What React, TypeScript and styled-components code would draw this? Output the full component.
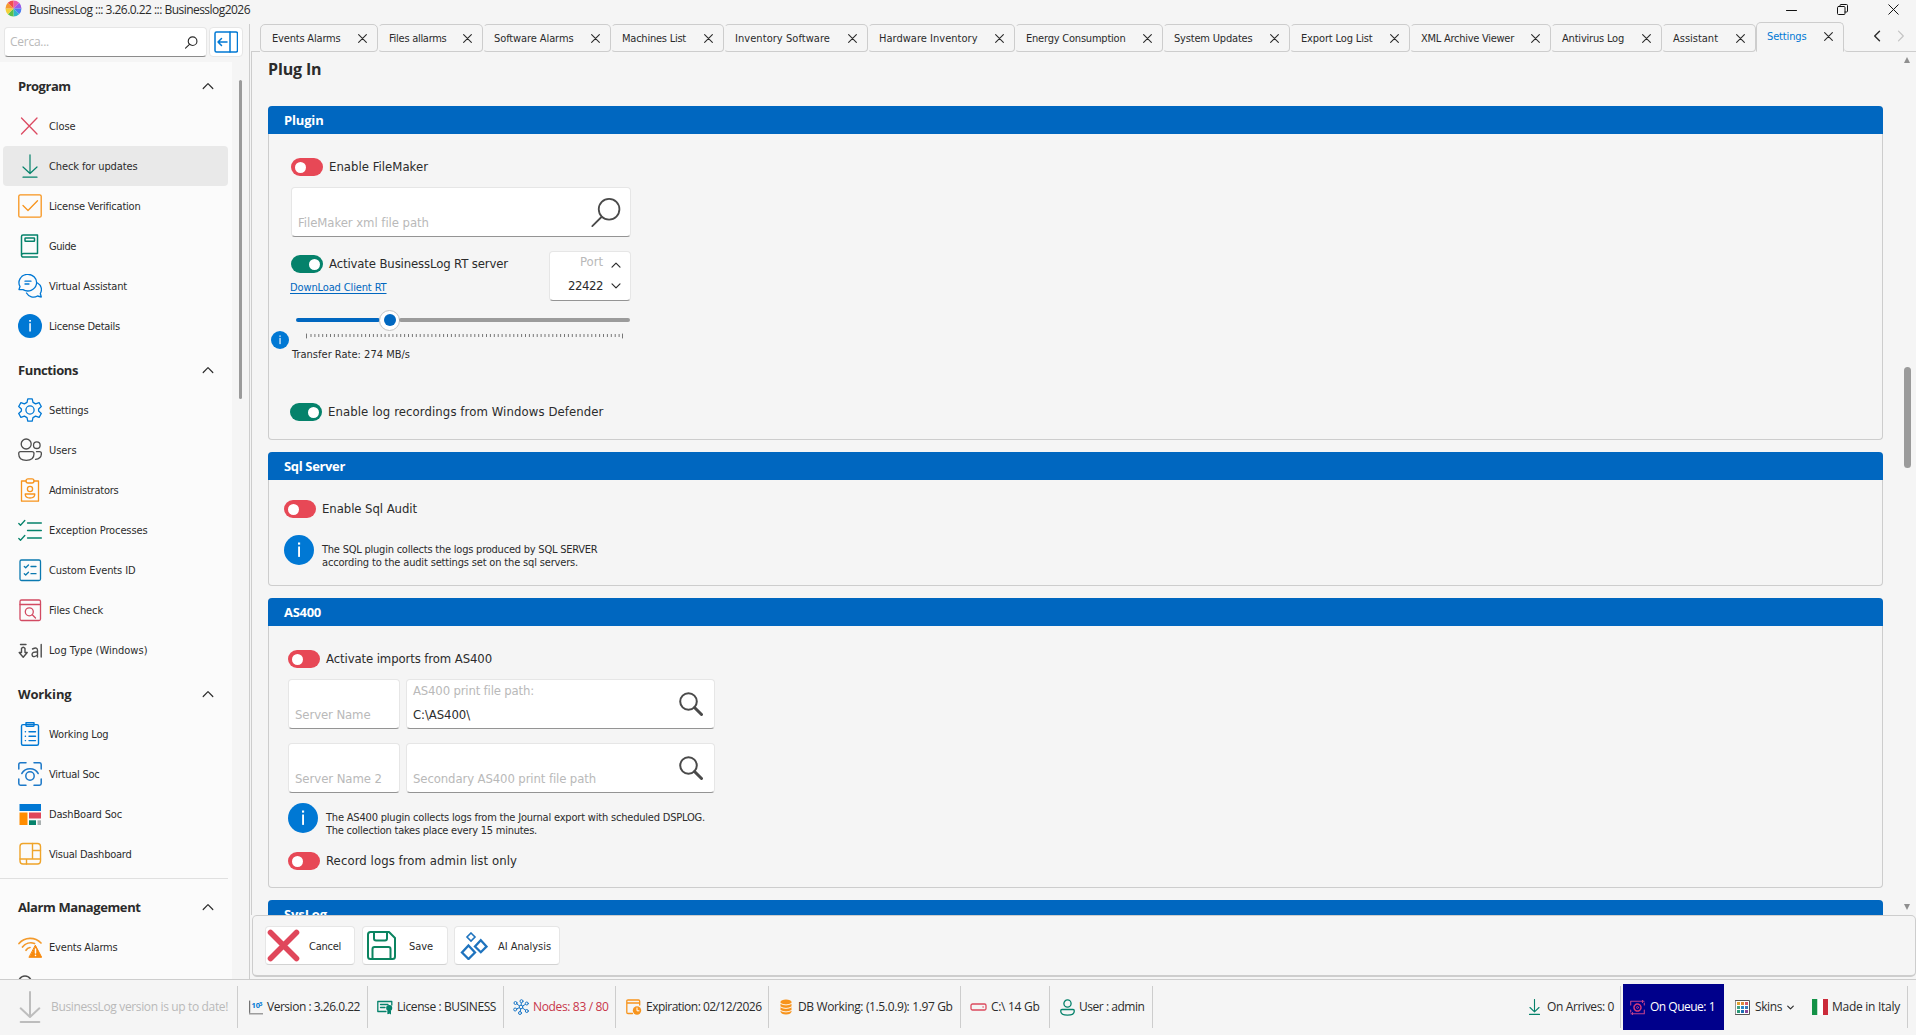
import React, { useMemo } from 'react';
import styled, { createGlobalStyle, css } from 'styled-components';

const TAHOMA = '"DejaVu Sans Condensed", "DejaVu Sans", sans-serif';
const SEGOE = '"Open Sans", "Noto Sans", sans-serif';
const C = {
  bg: '#f5f5f5', side: '#fbfbfb', line: '#cdcdcd', text: '#2b2b2b', faint: '#b9b9b9',
  blue: '#0078d4', head: '#0067c0', red: '#e74856', green: '#05826b', orange: '#f7941d', gray: '#4d4d4d',
};

const Global = createGlobalStyle`
  * { box-sizing: border-box; }
  body { margin: 0; background: ${C.bg}; color: ${C.text}; overflow: hidden; }
  svg { display: block; flex: none; fill: none; stroke-linecap: round; stroke-linejoin: round; }
`;

/* ---------- text ---------- */
type Face = 'small' | 'label' | 'status' | 'heading' | 'title';
const FACES: Record<Face, { size: number; family: string; bold?: boolean }> = {
  small: { size: 11, family: TAHOMA },
  label: { size: 13, family: TAHOMA },
  status: { size: 12, family: SEGOE },
  heading: { size: 13, family: SEGOE, bold: true },
  title: { size: 16, family: SEGOE, bold: true },
};
const TextSpan = styled.span<{ $face: Face; $color?: string; $underline?: boolean }>`
  display: block;
  white-space: pre;
  font-family: ${p => FACES[p.$face].family};
  font-size: ${p => FACES[p.$face].size}px;
  font-weight: ${p => (FACES[p.$face].bold ? 700 : 400)};
  line-height: ${p => FACES[p.$face].size + 4}px;
  color: ${p => p.$color ?? C.text};
  ${p => p.$underline && css`text-decoration: underline; text-underline-offset: 2px;`}
`;
const ruler = document.createElement('canvas').getContext('2d')!;

/** A caption whose tracking is computed so that it runs exactly `w` pixels wide. */
function Txt({ w, face = 'small', color, underline, children }: {
  w: number; face?: Face; color?: string; underline?: boolean; children: string;
}) {
  const tracking = useMemo(() => {
    const f = FACES[face];
    ruler.font = `${f.bold ? 'bold ' : ''}${f.size}px ${f.family}`;
    return (w - ruler.measureText(children).width) / children.length;
  }, [w, face, children]);
  return (
    <TextSpan $face={face} $color={color} $underline={underline} style={{ letterSpacing: `${tracking.toFixed(3)}px` }}>
      {children}
    </TextSpan>
  );
}

/* ---------- icons ---------- */
const Svg = ({ s = 24, w, h, vb = '0 0 24 24', c = C.text, sw = 1.3, children }: any) => (
  <svg width={w ?? s} height={h ?? s} viewBox={vb} stroke={c} strokeWidth={sw}>{children}</svg>
);
const Logo = () => (
  <svg width="17" height="17" viewBox="0 0 17 17">
    {['#e85bb0', '#9a5be8', '#4b7df0', '#2fb6c8', '#5cc04a', '#f2d136', '#f59a2f', '#f04e4e'].map((c, i) => (
      <path key={c} d="M8.500 8.500L8.500 .5A8 8 0 0 1 14.157 2.843Z" fill={c} transform={`rotate(${i * 45} 8.5 8.5)`} />
    ))}
  </svg>
);
const Search = ({ s = 24, c = C.text, sw = 1.3 }: any) => (
  <Svg s={s} c={c} sw={sw}><circle cx="14" cy="9.500" r="8" /><path d="M8.300 15.300L1 22.500" /></Svg>
);
const SearchBold = () => (
  <Svg s={24} c="#4a4a4a"><circle cx="9.500" cy="9.500" r="8.300" strokeWidth="2" /><path d="M15.500 15.500L22.500 22.500" strokeWidth="3" /></Svg>
);
const PaneIcon = () => (
  <Svg c={C.blue} sw={1.5}><rect x="1" y="2" width="22.500" height="20" rx="1.500" /><path d="M16 2V22M13 12H4M7.500 8.500L4 12L7.500 15.500" /></Svg>
);
const Chevron = ({ d = 'up', s = 12, c = C.text, sw = 1.2 }: any) => {
  const deg = ({ up: 0, right: 90, down: 180, left: 270 } as any)[d];
  return <Svg s={s} vb="0 0 12 12" c={c} sw={sw}><path d="M1.200 8.500L6 3.700L10.800 8.500" transform={`rotate(${deg} 6 6)`} /></Svg>;
};
const XIcon = ({ s = 9, c = C.text, sw = 1.2 }: any) => (
  <Svg s={s} vb="0 0 10 10" c={c} sw={sw}><path d="M.7.7L9.300 9.300M9.300.7L.7 9.300" /></Svg>
);
const Down = ({ s = 24, c = C.green, sw = 1.2 }: any) => (
  <Svg s={s} c={c} sw={sw}><path d="M12 .8V19M5 13L12 19.500L19 13M5 23.200H19" /></Svg>
);
const Info = ({ s = 24 }: any) => (
  <Svg s={s} c="none"><circle cx="12" cy="12" r="12" fill={C.blue} /><rect x="11.300" y="9.200" width="1.500" height="8.300" fill="#fff" /><rect x="11.200" y="6" width="1.700" height="1.700" fill="#fff" /></Svg>
);

const icons: Record<string, React.ReactNode> = {
  close: <Svg c="#dc4a62"><path d="M3.500 4L19 20M19 4L3.500 20" /></Svg>,
  download: <Down />,
  verify: <Svg c={C.orange}><rect x=".8" y=".8" width="22.400" height="22.400" rx="1.500" /><path d="M5 11.500L10 16.500L19.500 6.800" /></Svg>,
  guide: <Svg c={C.green} sw={1.5}><path d="M3.500 21.300V2.500Q3.500 1 5 1H19.500V19.500H5.500Q3.500 19.500 3.500 21.300T5.500 23H19.500" /><rect x="7" y="4" width="9.500" height="3.200" rx=".5" /></Svg>,
  chat: <Svg c={C.blue} sw={1.3}><path d="M1 15.500L2 12.500A8.800 8.300 0 1 1 5 15.600Z" /><path d="M7 7.200H13M7 10H11M19.500 9A7.500 7.500 0 0 1 22.300 19.500L23.300 23L19.500 22A8 8 0 0 1 8.500 19" /></Svg>,
  info: <Info />,
  gear: <Svg c={C.blue} sw={1.3}><path d="M9.800 .8H14.200L15 4.400L17.600 5.900L21.100 4.700L23.300 8.500L20.600 11V13L23.300 15.500L21.100 19.300L17.600 18.100L15 19.600L14.200 23.200H9.800L9 19.600L6.400 18.100L2.900 19.300L.7 15.500L3.400 13V11L.7 8.500L2.900 4.700L6.400 5.900L9 4.400Z" /><circle cx="12" cy="12" r="4.100" /></Svg>,
  users: <Svg c={C.gray} sw={1.3}><circle cx="8.200" cy="6" r="5" /><circle cx="18.800" cy="7.200" r="3.300" /><path d="M2.500 13.700H14Q16 13.700 16 15.700Q16 22.300 8.300 22.300T.7 15.700Q.7 13.700 2.500 13.700ZM18.500 13.700H21.500Q23.400 13.700 23.400 15.500Q23.400 20.700 17.500 21.300" /></Svg>,
  badge: <Svg c={C.orange}><path d="M8 3H3.500V23.200H20.500V3H16" /><rect x="8" y=".8" width="8" height="4.200" rx="2" /><circle cx="12" cy="11" r="2.600" /><path d="M7.200 16H16.800Q16.800 20 12 20T7.200 16Z" /></Svg>,
  checks: <Svg c={C.green}><path d="M.8 5.500L2.500 7.300L6.800 2.500M.8 20.500L2.500 22.300L6.800 17.500M9.500 5H23.400M9.500 12.500H23.400M9.500 20H23.400" /></Svg>,
  events: <Svg c="#0b79b0"><rect x="2" y="2" width="20.500" height="20.500" rx="1.500" /><path d="M6.300 8.500L7.700 9.800L10.500 7M6.300 15.700L7.700 17L10.500 14.200M13 8.500H18M13 15.700H18" /></Svg>,
  files: <Svg c="#d24a62"><rect x="2" y="2" width="20.500" height="20.500" rx="1.500" /><path d="M2 6.500H22.500M14.300 16.800L17.500 20" /><circle cx="11.300" cy="13.800" r="4" /></Svg>,
  logtype: <Svg c={C.gray} sw={1.4}><path d="M2.500 6.500H8M3.500 10.500Q5.200 8 7 10.500V14.500H9.200L5.200 19.200L1.200 14.500H3.500ZM14.500 11Q19.500 8.500 19.500 12.500V19M19.500 14Q14 13.500 14 16.700Q14.500 20.500 19.500 17M23.200 6.500V19" /></Svg>,
  clipboard: <Svg c={C.blue} sw={1.4}><rect x="3.500" y="2.600" width="17" height="20.700" rx="1.500" /><path d="M8 .8H16V3.500Q16 4.300 15 4.300H9Q8 4.300 8 3.500ZM7.300 9.800H7.500M7.300 14.200H7.500M7.300 18.600H7.500M11 9.800H17.500M11 14.200H17.500M11 18.600H17.500" /></Svg>,
  vsoc: <Svg c="#1c78c8" sw={1.5}><path d="M.8 7V2.500Q.8.8 2.500.8H8M16 .8H21.500Q23.200.8 23.200 2.500V7M.8 17V21.500Q.8 23.200 2.500 23.200H8M16 23.200H21.500Q23.200 23.200 23.200 21.500V17M3.800 11.500A9.500 9.500 0 0 1 20.200 11.500" /><circle cx="12" cy="14" r="4.200" /></Svg>,
  dash: <svg width="24" height="24" viewBox="0 0 24 24"><path d="M1.500 2H23V9H1.500Z" fill={C.blue} /><path d="M1.500 10.500H9.500V23H1.500Z" fill="#ff8c00" /><path d="M11 10.500H23V16.500H11Z" fill="#e0475b" /><path d="M11 18.300H18V23H11Z" fill={C.green} /><path d="M19.500 18.300H23V23H19.500Z" fill="#a9b0b0" /></svg>,
  visual: <Svg c="#efa42a" sw={1.4}><rect x="2" y="1.500" width="20.500" height="20.500" rx="3" /><path d="M14.500 1.500V17M2 17H22.500M14.500 8.500H22.500M8.500 17V22" /></Svg>,
  alarm: <Svg c="#f39a2b" sw={1.7}><path d="M1 8.500A15 15 0 0 1 23 8M4.500 12A10.500 10.500 0 0 1 16.500 8.500M8 15.300A6 6 0 0 1 12 12.500" /><path d="M17.500 10.500L23.700 22.300H11.300Z" fill="#f7890c" stroke="#f7890c" strokeWidth="1" /><path d="M17.500 14V18M17.500 20.200V20.400" stroke="#fff" strokeWidth="1.500" /></Svg>,
  stub: <Svg c={C.gray} sw={1.5}><path d="M1 9V5Q3 1 7 1T13 5V9" /></Svg>,
};

/* ---------- frame ---------- */
const Window = styled.div`width: 1916px; height: 1035px; display: flex; flex-direction: column; background: ${C.bg}; overflow: hidden;`;
const TitleBar = styled.header`height: 24px; flex: none; display: flex; align-items: flex-start; padding-left: 5px; gap: 7px;`;
const TitleText = styled.div`flex: 1; padding-top: 2px;`;
const WinButtons = styled.div`display: flex; align-items: center; gap: 40px; height: 18px; padding: 1px 17px 0 0;`;
const Body = styled.div`height: 955px; flex: none; display: flex;`;

const Sidebar = styled.aside`width: 250px; flex: none; display: flex; flex-direction: column; border-right: 1px solid ${C.line};`;
const SearchRow = styled.div`display: flex; gap: 2px; padding: 3px 0 0 4px; height: 38px; flex: none;`;
const raised = css`background: #fff; border: 1px solid #e6e6e6; border-radius: 4px;`;
const SearchBox = styled.div`${raised} width: 203px; height: 30px; display: flex; align-items: center; justify-content: space-between; padding: 0 8px 0 5px; border-bottom-color: #8c8c8c;`;
const PaneButton = styled.div`${raised} width: 34px; height: 30px; display: flex; align-items: center; justify-content: center;`;
const NavArea = styled.div`flex: 1; min-height: 0; display: flex; gap: 7px; overflow: hidden;`;
const Nav = styled.nav`width: 232px; background: ${C.side}; padding-top: 4px; overflow: hidden;`;
const NavThumb = styled.div`width: 3px; height: 319px; margin-top: 18px; border-radius: 2px; background: #9b9b9b;`;
const NavGroup = styled.section<{ $ruled?: boolean }>`
  margin-bottom: 4px;
  ${p => p.$ruled && css`border-top: 1px solid #e0e0e0; padding-top: 8px; margin-right: 4px;`}
`;
const NavHead = styled.div`height: 40px; width: 214px; padding-left: 18px; display: flex; align-items: center; justify-content: space-between;`;
const NavItem = styled.div<{ $active?: boolean }>`
  height: 40px; width: 225px; margin-left: 3px; padding-left: 15px; display: flex; align-items: center; gap: 7px; border-radius: 4px;
  background: ${p => (p.$active ? '#e9e9e9' : 'transparent')};
`;

const Main = styled.main`width: 1666px; flex: none; display: flex; flex-direction: column;`;
const TabStrip = styled.div`height: 28px; flex: none; display: flex; align-items: flex-end;`;
const TabLead = styled.div`width: 9px; height: 1px; margin-left: 1px; background: ${C.line};`;
const Tab = styled.div<{ $w: number; $on?: boolean }>`
  width: ${p => p.$w}px; height: ${p => (p.$on ? 30 : 28)}px; flex: none;
  display: flex; align-items: center; justify-content: space-between; padding: ${p => (p.$on ? '0 10.5px 1px 10px' : '1px 10.5px 0 10px')};
  border: 1px solid ${C.line}; border-radius: 5px 5px ${p => (p.$on ? '0 0' : '4px 4px')};
  border-left-color: ${p => (p.$on ? C.line : 'transparent')};
  border-bottom-color: ${p => (p.$on ? 'transparent' : C.line)};
  &:nth-child(2) { border-left-color: ${C.line}; padding-left: 11px; }
`;
const TabTail = styled.div`flex: 1; height: 28px; display: flex; align-items: center; justify-content: flex-end; gap: 12px; padding: 0 9px 3px 0; border-bottom: 1px solid ${C.line}; border-bottom-left-radius: 4px;`;
const Page = styled.div`height: 863px; flex: none; margin-left: 1px; border-left: 1px solid ${C.line}; display: flex; overflow: hidden; padding-left: 16px;`;
const Column = styled.div`width: 1615px; flex: none;`;
const PageTitle = styled.div`height: 54px; padding-top: 7px;`;
const Group = styled.section<{ $h: number }>`height: ${p => p.$h}px; margin-bottom: 12px; border: 1px solid ${C.line}; border-top: 0; border-radius: 4px;`;
const GroupHead = styled.div`height: 28px; margin: 0 -1px; padding: 0 16px; display: flex; align-items: center; background: ${C.head}; border-radius: 4px 4px 0 0;`;
const ScrollColumn = styled.div`flex: 1; display: flex; flex-direction: column; align-items: center; padding: 5px 0 5px 15px;`;
const Arrow = styled.i<{ $down?: boolean }>`width: 0; height: 0; border: 3.500px solid transparent; ${p => (p.$down ? 'border-top: 6px solid #8f8f8f; border-bottom: 0;' : 'border-bottom: 6px solid #8f8f8f; border-top: 0;')}`;
const Thumb = styled.div`width: 7px; height: 101px; margin-top: 304px; margin-bottom: auto; border-radius: 4px; background: #9b9b9b;`;

const Stack = styled.div<{ $l: number; $t: number }>`display: flex; flex-direction: column; padding: ${p => p.$t}px 0 0 ${p => p.$l}px;`;
const Row = styled.div<{ $gap?: number; $top?: number; $left?: number; $align?: string }>`
  display: flex; align-items: ${p => p.$align ?? 'center'}; gap: ${p => p.$gap ?? 0}px; margin: ${p => p.$top ?? 0}px 0 0 ${p => p.$left ?? 0}px;
`;
const Switch = styled.div<{ $on?: boolean }>`
  width: 32px; height: 18px; flex: none; border-radius: 9px; display: flex; align-items: center; padding: 0 3.500px;
  background: ${p => (p.$on ? C.green : C.red)}; justify-content: ${p => (p.$on ? 'flex-end' : 'flex-start')};
  &::after { content: ''; width: 11px; height: 11px; border-radius: 50%; background: #fff; }
`;
const SwitchLabel = styled.div`height: 18px;`;
const Field = styled.div<{ $w: number; $pr?: number }>`
  ${raised} width: ${p => p.$w}px; height: 50px; flex: none; border-bottom-color: #949494;
  display: flex; align-items: center; justify-content: space-between; padding: 0 ${p => p.$pr ?? 11}px 0 6px;
`;
const FieldText = styled.div`height: 100%; display: flex; flex-direction: column; justify-content: space-between; padding: 2px 0 5px;`;
const Spinner = styled.div`${raised} width: 82px; height: 50px; border-bottom-color: #949494; display: flex; justify-content: flex-end; gap: 8px; padding-right: 9px;`;
const SpinText = styled.div`display: flex; flex-direction: column; align-items: flex-end; gap: 7px; padding-top: 1px;`;
const SpinArrows = styled.div`display: flex; flex-direction: column; gap: 11px; padding-top: 8px;`;
const Slider = styled.div`width: 334px; height: 22px; display: flex; align-items: center; margin: 8px 0 0 5px;`;
const Track = styled.div<{ $w: number; $c: string }>`width: ${p => p.$w}px; height: 4px; border-radius: 2px; background: ${p => p.$c};`;
const Knob = styled.div`width: 21px; height: 21px; margin: 0 -1px; border: 1px solid #c4c4c4; border-radius: 50%; background: #fff; display: flex; align-items: center; justify-content: center; &::after { content: ''; width: 12px; height: 12px; border-radius: 50%; background: ${C.head}; }`;
const TickRow = styled.div`height: 16px; display: flex; align-items: flex-start; gap: 17px; margin-left: -20px; & > :last-child { margin-top: 2px; }`;
const Note = styled.div`display: flex; flex-direction: column; margin-bottom: -4px; & > * { line-height: 13px; }`;

const Footer = styled.div`height: 62px; flex: none; margin-left: 2px; border: 1px solid ${C.line}; border-bottom: 2px solid ${C.line}; border-radius: 5px; display: flex; align-items: flex-start; padding: 10px 0 0 12px;`;
const Button = styled.div<{ $w: number; $gap: number; $ml: number; $pl: number }>`
  ${raised} width: ${p => p.$w}px; height: 39px; margin-left: ${p => p.$ml}px; padding-left: ${p => p.$pl}px; gap: ${p => p.$gap}px;
  display: flex; align-items: center; border-bottom-color: #d2d2d2;
  & > span { padding-top: 2px; }
`;

const StatusBar = styled.footer`height: 56px; flex: none; border-top: 1px solid ${C.line}; display: flex; align-items: flex-start; padding-top: 4px;`;
const Cell = styled.div<{ $w: number; $pl: number; $gap: number; $sep?: boolean; $navy?: boolean }>`
  width: ${p => p.$w}px; height: ${p => (p.$navy ? 46 : 42)}px; margin-top: ${p => (p.$navy ? 0 : 2)}px; flex: none;
  display: flex; align-items: center; padding-left: ${p => p.$pl}px; gap: ${p => p.$gap}px;
  border-right: 1px solid ${p => (p.$sep ? C.line : 'transparent')};
  background: ${p => (p.$navy ? '#00008b' : 'transparent')};
`;
const Spacer = styled.div`flex: 1;`;

/* ---------- data ---------- */
type Item = [string, string, number];
const groups: { title: string; w: number; ruled?: boolean; items: Item[] }[] = [
  { title: 'Program', w: 52.5, items: [['close', 'Close', 26.5], ['download', 'Check for updates', 88.5], ['verify', 'License Verification', 91.5], ['guide', 'Guide', 27], ['chat', 'Virtual Assistant', 78], ['info', 'License Details', 71]] },
  { title: 'Functions', w: 60, items: [['gear', 'Settings', 39.5], ['users', 'Users', 27.5], ['badge', 'Administrators', 69.5], ['checks', 'Exception Processes', 98.5], ['events', 'Custom Events ID', 86.5], ['files', 'Files Check', 54], ['logtype', 'Log Type (Windows)', 98.5]] },
  { title: 'Working', w: 53.5, items: [['clipboard', 'Working Log', 59.5], ['vsoc', 'Virtual Soc', 50.5], ['dash', 'DashBoard Soc', 73], ['visual', 'Visual Dashboard', 82.5]] },
  { title: 'Alarm Management', w: 122.5, ruled: true, items: [['alarm', 'Events Alarms', 68.5], ['stub', ' ', 3]] },
];
const tabs: [string, number, number][] = [
  ['Events Alarms', 68.5, 118], ['Files allarms', 57.5, 105], ['Software Alarms', 79.5, 128], ['Machines List', 64, 113],
  ['Inventory Software', 95, 144], ['Hardware Inventory', 98.5, 147], ['Energy Consumption', 99.500, 148], ['System Updates', 78.5, 127],
  ['Export Log List', 71.5, 120], ['XML Archive Viewer', 93, 141], ['Antivirus Log', 62, 111], ['Assistant', 45, 94], ['Settings', 39.5, 88],
];

const NumberIcon = () => (
  <svg width="14" height="15" viewBox="0 0 14 15">
    <path d="M.7 1V12.500" stroke="#555" /><path d="M.5 13.800H13.500" stroke="#444" strokeDasharray="1 1" strokeWidth="1.500" strokeLinecap="butt" />
    <text x="2.500" y="8" fontSize="7.500" fontWeight="700" fontFamily={SEGOE} fill={C.blue}>10</text>
    <text x="10" y="6" fontSize="6" fontWeight="700" fontFamily={SEGOE} fill={C.blue}>3</text>
  </svg>
);
const NODES = [[8.500, 2.200], [2.500, 4], [2.200, 10.500], [7, 14], [13.800, 12], [13.8, 4.500]];

const Toggle = ({ on, w, children }: { on?: boolean; w: number; children: string }) => (
  <><Switch $on={on} /><SwitchLabel><Txt face="label" w={w}>{children}</Txt></SwitchLabel></>
);

export default function App() {
  return (
    <Window>
      <Global />
      <TitleBar>
        <Logo />
        <TitleText><Txt face="status" w={221}>BusinessLog ::: 3.26.0.22 ::: Businesslog2026</Txt></TitleText>
        <WinButtons>
          <Svg s={11} vb="0 0 11 11" c="#111" sw={1}><path d="M.5 6.500H10.500" /></Svg>
          <Svg s={11} vb="0 0 11 11" c="#111" sw={1}><rect x=".5" y="2.500" width="7.500" height="8" rx="1" /><path d="M3 2.500V1.500Q3 .5 4 .5H9.500Q10.500.5 10.500 1.500V7Q10.500 8 9.500 8H8" /></Svg>
          <XIcon s={11} c="#111" sw={0.9} />
        </WinButtons>
      </TitleBar>

      <Body>
        <Sidebar>
          <SearchRow>
            <SearchBox><Txt face="status" color={C.faint} w={39}>Cerca...</Txt><Search s={13} sw={2.100} /></SearchBox>
            <PaneButton><PaneIcon /></PaneButton>
          </SearchRow>
          <NavArea>
            <Nav>
              {groups.map(g => (
                <NavGroup key={g.title} $ruled={g.ruled}>
                  <NavHead><Txt face="heading" w={g.w}>{g.title}</Txt><Chevron /></NavHead>
                  {g.items.map(([icon, label, w]) => (
                    <NavItem key={icon} $active={icon === 'download'}>{icons[icon]}<Txt w={w}>{label}</Txt></NavItem>
                  ))}
                </NavGroup>
              ))}
            </Nav>
            <NavThumb />
          </NavArea>
        </Sidebar>

        <Main>
          <TabStrip>
            <TabLead />
            {tabs.map(([label, w, tw]) => {
              const on = label === 'Settings';
              return <Tab key={label} $w={tw} $on={on}><Txt w={w} color={on ? C.blue : undefined}>{label}</Txt><XIcon /></Tab>;
            })}
            <TabTail><Chevron d="left" sw={1.4} /><Chevron d="right" c="#c4c4c4" /></TabTail>
          </TabStrip>

          <Page>
            <Column>
              <PageTitle><Txt face="title" w={53.5}>Plug In</Txt></PageTitle>

              <Group $h={334}>
                <GroupHead><Txt face="heading" color="#fff" w={39.5}>Plugin</Txt></GroupHead>
                <Stack $l={22} $t={24}>
                  <Row $gap={6}><Toggle w={99}>Enable FileMaker</Toggle></Row>
                  <Row $top={11}>
                    <Field $w={340} $pr={8}>
                      <FieldText><span /><Txt face="label" color={C.faint} w={131}>FileMaker xml file path</Txt></FieldText>
                      <Search s={31} c="#4a4a4a" sw={1.4} />
                    </Field>
                  </Row>
                  <Row $top={14} $align="flex-start">
                    <Stack $l={0} $t={4}>
                      <Row $gap={6}><Toggle on w={179}>Activate BusinessLog RT server</Toggle></Row>
                      <Row $top={7} $left={-1}><Txt color={C.head} underline w={96.5}>DownLoad Client RT</Txt></Row>
                    </Stack>
                    <Row $left={41}>
                      <Spinner>
                        <SpinText><Txt face="label" color={C.faint} w={23}>Port</Txt><Txt face="label" w={35}>22422</Txt></SpinText>
                        <SpinArrows><Chevron s={10} sw={1.400} /><Chevron s={10} sw={1.400} d="down" /></SpinArrows>
                      </Spinner>
                    </Row>
                  </Row>
                  <Slider>
                    <Track $w={84} $c={C.head} /><Knob /><Track $w={231} $c="#9b9b9b" />
                  </Slider>
                  <TickRow>
                    <Info s={18} />
                    <Svg w={317} h={6} vb="0 0 317 6" c="#777" sw={1}>
                      <path d="M.5 1V5M316.500 1V5" /><path d="M4.500 2.500H315" strokeWidth="3" strokeDasharray="1 2.900" strokeLinecap="butt" />
                    </Svg>
                  </TickRow>
                  <Row $left={1}><Txt w={118}>Transfer Rate: 274 MB/s</Txt></Row>
                  <Row $gap={6} $top={41} $left={-1}><Toggle on w={275.5}>Enable log recordings from Windows Defender</Toggle></Row>
                </Stack>
              </Group>

              <Group $h={134}>
                <GroupHead><Txt face="heading" color="#fff" w={61}>Sql Server</Txt></GroupHead>
                <Stack $l={15} $t={20}>
                  <Row $gap={6}><Toggle w={95}>Enable Sql Audit</Toggle></Row>
                  <Row $gap={8} $top={17} $align="flex-end">
                    <Info s={30} />
                    <Note><Txt w={275.5}>The SQL plugin collects the logs produced by SQL SERVER</Txt><Txt w={256}>according to the audit settings set on the sql servers.</Txt></Note>
                  </Row>
                </Stack>
              </Group>

              <Group $h={290}>
                <GroupHead><Txt face="heading" color="#fff" w={37}>AS400</Txt></GroupHead>
                <Stack $l={19} $t={24}>
                  <Row $gap={6}><Toggle w={166}>Activate imports from AS400</Toggle></Row>
                  <Row $gap={6} $top={11}>
                    <Field $w={112}><FieldText><span /><Txt face="label" color={C.faint} w={75.5}>Server Name</Txt></FieldText></Field>
                    <Field $w={309}>
                      <FieldText><Txt face="label" color={C.faint} w={121}>AS400 print file path:</Txt><Txt face="label" w={57}>{'C:\\AS400\\'}</Txt></FieldText>
                      <SearchBold />
                    </Field>
                  </Row>
                  <Row $gap={6} $top={14}>
                    <Field $w={112}><FieldText><span /><Txt face="label" color={C.faint} w={87}>Server Name 2</Txt></FieldText></Field>
                    <Field $w={309}>
                      <FieldText><span /><Txt face="label" color={C.faint} w={183}>Secondary AS400 print file path</Txt></FieldText>
                      <SearchBold />
                    </Field>
                  </Row>
                  <Row $gap={8} $top={10} $align="flex-end">
                    <Info s={30} />
                    <Note><Txt w={379}>The AS400 plugin collects logs from the Journal export with scheduled DSPLOG.</Txt><Txt w={211}>The collection takes place every 15 minutes.</Txt></Note>
                  </Row>
                  <Row $gap={6} $top={19}><Toggle w={191}>Record logs from admin list only</Toggle></Row>
                </Stack>
              </Group>

              <Group $h={60}>
                <GroupHead><Txt face="heading" color="#fff" w={43}>SysLog</Txt></GroupHead>
              </Group>
            </Column>
            <ScrollColumn><Arrow /><Thumb /><Arrow $down /></ScrollColumn>
          </Page>

          <Footer>
            <Button $w={90} $gap={9} $ml={0} $pl={1}>
              <Svg s={33} vb="0 0 33 33" c="#e0475b" sw={5.6}><path d="M3.500 3.500L29.500 29.500M29.500 3.500L3.500 29.500" /></Svg><Txt w={32}>Cancel</Txt>
            </Button>
            <Button $w={86} $gap={13} $ml={7} $pl={4}>
              <Svg s={29} vb="0 0 29 29" c="#0b8460" sw={2}><path d="M3.500 1H22L28 7V25.500Q28 28 25.500 28H3.500Q1 28 1 25.500V3.500Q1 1 3.500 1ZM7 1V7.500Q7 9.500 9 9.500H18Q20 9.500 20 7.500V1M5.500 28V18Q5.500 16 7.500 16H21.500Q23.500 16 23.500 18V28" /></Svg><Txt w={24}>Save</Txt>
            </Button>
            <Button $w={106} $gap={10} $ml={6} $pl={5}>
              <Svg s={28} vb="0 0 28 28" c="#1e73be" sw={2.3}><g strokeLinejoin="miter"><path d="M8.500 13.500L15 20.500L8.500 27L2 20.500Z" /><path d="M20.800 8.300L26.500 14.500L20.800 20.200L15 14.500Z" /><path d="M11 1L15 5L11 9L7 5Z" strokeWidth="1.600" /></g></Svg><Txt w={53}>AI Analysis</Txt>
            </Button>
          </Footer>
        </Main>
      </Body>

      <StatusBar>
        <Cell $w={238} $pl={14} $gap={5} $sep><Down s={32} c="#bdbdbd" sw={1.500} /><Txt face="status" color="#b9b9b9" w={177}>BusinessLog version is up to date!</Txt></Cell>
        <Cell $w={130} $pl={11} $gap={4} $sep><NumberIcon /><Txt face="status" w={93}>Version : 3.26.0.22</Txt></Cell>
        <Cell $w={136} $pl={9} $gap={4} $sep>
          <Svg s={16} vb="0 0 16 16" c={C.green}><path d="M9 12.500H.8V2.500H14.800V6M3.500 5.500H11M3.500 8.500H8" /><circle cx="12.200" cy="9" r="2.400" fill={C.green} /><path d="M10.900 12V15L12.200 14L13.500 15V12Z" fill={C.green} strokeWidth="1" /></Svg>
          <Txt face="status" w={99}>License : BUSINESS</Txt>
        </Cell>
        <Cell $w={112} $pl={9} $gap={4} $sep>
          <Svg s={16} vb="0 0 16 16" c="#1c78c8" sw={1}>{NODES.map(([x, y]) => <g key={x + y * 9}><path d={`M8 8L${x} ${y}`} /><circle cx={x} cy={y} r="1.500" fill={C.bg} /></g>)}<circle cx="8" cy="8" r="1.800" fill={C.bg} /></Svg>
          <Txt face="status" color="#c8364b" w={75.500}>Nodes: 83 / 80</Txt>
        </Cell>
        <Cell $w={153} $pl={10} $gap={4} $sep>
          <Svg s={16} vb="0 0 16 16" c={C.orange}><path d="M6.500 14.500H2Q.8 14.500.8 13.300V2.200Q.8 1 2 1H12.500Q13.700 1 13.700 2.200V6M.8 4H13.700" /><circle cx="11" cy="11.500" r="4.200" fill={C.orange} stroke="none" /><path d="M11 9V11.800H13" stroke="#fff" strokeWidth="1" /></Svg>
          <Txt face="status" w={115.500}>Expiration: 02/12/2026</Txt>
        </Cell>
        <Cell $w={192} $pl={11} $gap={6} $sep>
          <svg width="12" height="16" viewBox="0 0 12 16">
            <path d="M.5 3.500V12.500Q1 15.500 6 15.500T11.500 12.500V3.500Z" fill="#f7941d" /><ellipse cx="6" cy="3" rx="5.500" ry="2.500" fill="#f7941d" />
            <path d="M.5 4.500Q6 7.500 11.500 4.500M.5 8Q6 11 11.500 8M.5 11.500Q6 14.500 11.500 11.500" stroke="#fff" strokeWidth=".9" />
          </svg>
          <Txt face="status" w={154.500}>DB Working: (1.5.0.9): 1.97 Gb</Txt>
        </Cell>
        <Cell $w={89} $pl={9} $gap={4} $sep>
          <Svg w={17} h={8} vb="0 0 17 8" c="#dc4a5e"><rect x="1" y="1" width="15" height="6" rx="1.500" /><path d="M13 4H13.200" /></Svg>
          <Txt face="status" w={48.500}>{'C:\\ 14 Gb'}</Txt>
        </Cell>
        <Cell $w={103} $pl={10} $gap={4} $sep>
          <Svg w={15} h={17} vb="0 0 15 17" c={C.green}><circle cx="7.500" cy="4.500" r="3.600" /><path d="M2 10.500H13Q14.300 10.500 14.300 12Q14.300 16.200 7.500 16.200T.7 12Q.7 10.500 2 10.500Z" /></Svg>
          <Txt face="status" w={65.500}>User : admin</Txt>
        </Cell>
        <Spacer />
        <Cell $w={94} $pl={1} $gap={6} $sep><Svg w={13} h={16} vb="0 0 13 16" c={C.green} sw={1.100}><path d="M6.500 .5V12.500M2 8.500L6.500 12.800L11 8.500M1.500 15.400H11.500" /></Svg><Txt face="status" w={67}>On Arrives: 0</Txt></Cell>
        <Cell $w={2} $pl={0} $gap={0} />
        <Cell $w={101} $pl={7} $gap={5} $navy>
          <Svg s={15} vb="0 0 15 15" c="#c0408c" sw={1.100}><path d="M.7 5V1.300H14M12.500.3V2.500M14.300 10V13.700H1M2.500 12.500V14.700M14.300 5V3M.7 10V12" /><circle cx="7.500" cy="7.500" r="3.500" stroke="#d83a78" strokeDasharray="1.800 .9" strokeWidth="1.500" /><circle cx="7.500" cy="7.500" r="1" stroke="#d83a78" strokeWidth=".8" /></Svg>
          <Txt face="status" color="#fff" w={65}>On Queue: 1</Txt>
        </Cell>
        <Cell $w={85} $pl={11} $gap={5}>
          <Svg s={15} vb="0 0 15 15" c="#555" sw={1}><rect x=".5" y=".5" width="14" height="14" fill="#fff" />
            {['#e0a030', '#e08a3a', '#d85a6a', '#40a080', '#2f86c8', '#3a78b8', '#2a9a78', '#1c6fb4', '#8a4a9a'].map((c, i) => (
              <rect key={c} x={2 + (i % 3) * 4} y={2 + Math.floor(i / 3) * 4} width="3" height="3" fill={c} stroke="none" />
            ))}
          </Svg>
          <Txt face="status" w={27}>Skins</Txt><Chevron s={7} d="down" sw={2} />
        </Cell>
        <Cell $w={99} $pl={3} $gap={4} $sep>
          <svg width="16" height="16" viewBox="0 0 16 16"><path d="M0 0H5.500V16H0Z" fill="#149247" /><path d="M5.500 0H11V16H5.500Z" fill="#fff" /><path d="M11 0H16V16H11Z" fill="#cb2b3a" /></svg>
          <Txt face="status" w={68}>Made in Italy</Txt>
        </Cell>
        <Cell $w={8} $pl={0} $gap={0} />
      </StatusBar>
    </Window>
  );
}
